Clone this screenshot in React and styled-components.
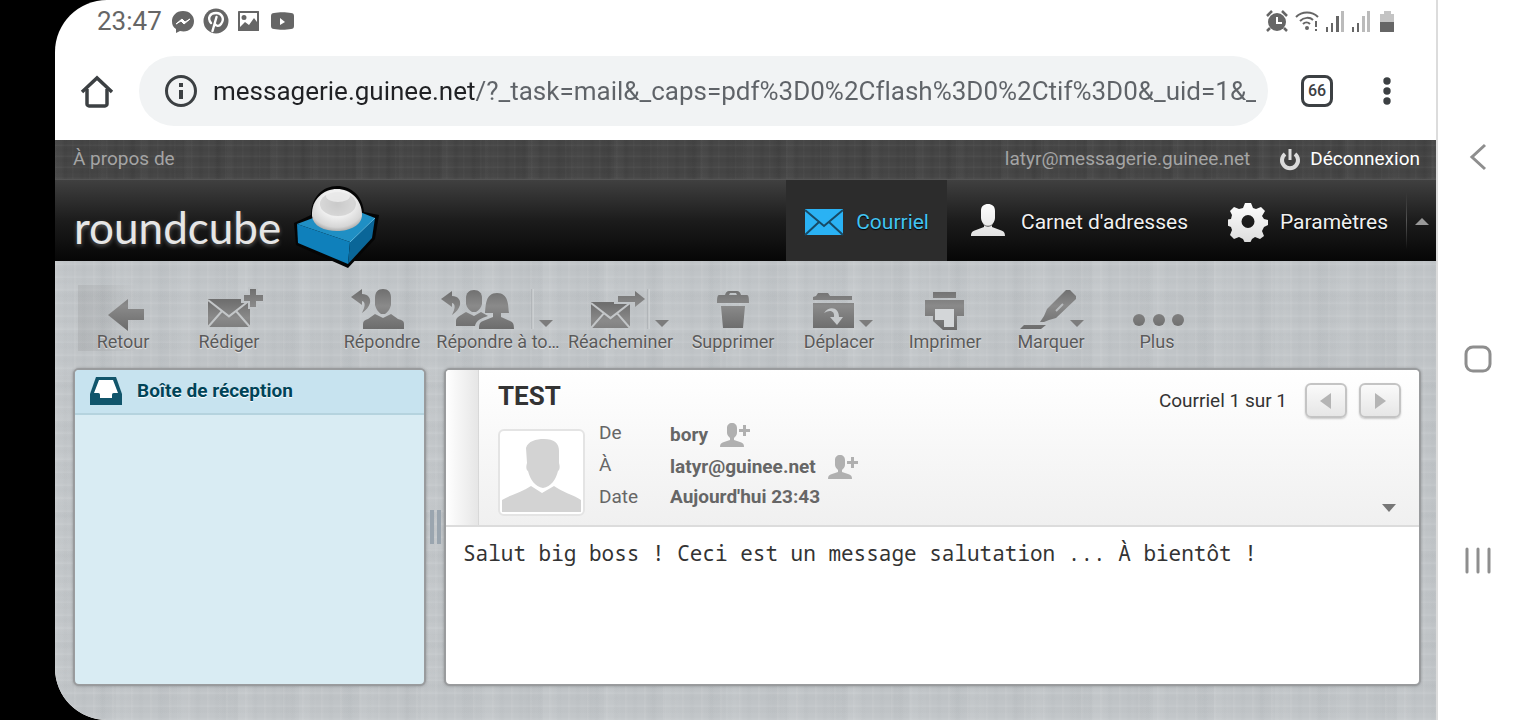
import React from "react";
import styled, { createGlobalStyle, css } from "styled-components";

const GlobalStyle = createGlobalStyle`
  * { box-sizing: border-box; }
  html, body { margin: 0; padding: 0; background: #000; }
  body { font-family: Roboto, "Liberation Sans", sans-serif; }
  button, input { font: inherit; color: inherit; border: 0; margin: 0; padding: 0; background: none; }
  a { color: inherit; text-decoration: none; }
  svg { display: block; flex: none; }
`;

const darkLinen = css`
  background:
    repeating-linear-gradient(90deg, rgba(255,255,255,0.02) 0 1px, transparent 2px 7px, rgba(0,0,0,0.04) 9px 11px, transparent 13px 17px),
    repeating-linear-gradient(90deg, rgba(255,255,255,0.02) 0 5px, transparent 12px 29px, rgba(0,0,0,0.04) 33px, transparent 43px),
    repeating-linear-gradient(0deg, rgba(255,255,255,0.03) 0 1px, transparent 2px 5px, rgba(0,0,0,0.04) 7px, transparent 11px),
    #464646;
`;

const lightLinen = css`
  background:
    repeating-linear-gradient(90deg, rgba(255,255,255,0.06) 0 1px, transparent 3px 7px, rgba(90,100,105,0.02) 9px 11px, transparent 13px 19px),
    repeating-linear-gradient(0deg, rgba(255,255,255,0.07) 0 1px, transparent 3px 6px, rgba(90,100,105,0.02) 8px 9px, transparent 13px),
    repeating-linear-gradient(90deg, rgba(255,255,255,0.05) 0 9px, transparent 19px 41px, rgba(90,100,105,0.03) 47px, transparent 61px),
    repeating-linear-gradient(0deg, rgba(255,255,255,0.04) 0 5px, transparent 13px 27px, rgba(90,100,105,0.02) 33px, transparent 43px),
    #c0c4c7;
`;

const Device = styled.div`
  display: flex;
  min-height: 100vh;
  padding-left: 55px;
  background: linear-gradient(90deg, #000 0 50%, #fff 50%);
`;

const Screen = styled.div`
  flex: 1;
  min-width: 0;
  display: flex;
  flex-direction: column;
  overflow: hidden;
  border-radius: 52px 0 0 52px;
  background: #fff;
`;

const StatusBar = styled.div`
  display: flex;
  align-items: center;
  justify-content: space-between;
  height: 44px;
  padding: 0 39px 2px 42px;
  color: #666;
`;

const StatusGroup = styled.div`
  display: flex;
  align-items: center;
  gap: ${(p) => p.$gap}px;
`;

const Clock = styled.time`
  font-size: 26px;
  line-height: 32px;
`;

const BrowserBar = styled.div`
  display: flex;
  align-items: center;
  height: 96px;
  padding: 12px 31px 14px 24px;
  color: #3c4043;
`;

const AddressBox = styled.label`
  flex: 1;
  min-width: 0;
  display: flex;
  align-items: center;
  gap: 14px;
  height: 70px;
  margin: 0 33px 0 24px;
  padding: 0 12px 0 24px;
  border-radius: 35px;
  background: #f1f3f4;
`;

const AddressInput = styled.input`
  flex: 1;
  min-width: 0;
  font-size: 26px;
  line-height: 36px;
  font-variant-ligatures: none;
  color: transparent;
  background: linear-gradient(90deg, #202124 262px, #5f6368 262px);
  background-clip: text;
  -webkit-background-clip: text;
`;

const IconButton = styled.button`
  display: flex;
  align-items: center;
  justify-content: center;
  width: 36px;
  height: 36px;
`;

const TabsButton = styled.button`
  width: 32px;
  height: 32px;
  border: 3px solid #3c4043;
  border-radius: 8px;
  font-size: 16px;
  line-height: 26px;
  font-weight: 500;
  margin-right: 36px;
`;

const TopLine = styled.div`
  ${darkLinen}
  display: flex;
  align-items: center;
  justify-content: space-between;
  height: 40px;
  padding: 0 16px 2px 18px;
  border-bottom: 1px solid #555;
  font-size: 19px;
  line-height: 24px;
  color: #a4a4a4;
`;

const Session = styled.div`
  display: flex;
  align-items: center;
  gap: 28px;
`;

const Logout = styled.a`
  display: flex;
  align-items: center;
  gap: 8px;
  color: #fff;
`;

const Header = styled.header`
  position: relative;
  z-index: 1;
  display: flex;
  justify-content: space-between;
  height: 81px;
  background: linear-gradient(#404040, #1c1c1c 50%, #060606);
`;

const Logo = styled.a`
  display: flex;
  align-items: flex-start;
  gap: 12px;
  padding: 5px 0 0 19px;
`;

const Wordmark = styled.span`
  padding-top: 18px;
  font: 44px/48px Lato, sans-serif;
  color: #e6e6e6;
  text-shadow: 0 2px 4px rgba(255, 255, 255, 0.3);
`;

const TaskNav = styled.nav`
  display: flex;
  gap: 4px;
`;

const Task = styled.a`
  display: flex;
  align-items: center;
  gap: 12px;
  padding: 2px 18px 0;
  font-size: 21px;
  line-height: 28px;
  white-space: nowrap;
  color: ${(p) => (p.$active ? "#42c4f2" : "#f0f0f0")};
  background: ${(p) => (p.$active ? "#2c2c2c" : "none")};
  text-shadow: 0 1px 1px #000;
`;

const CollapseButton = styled.button`
  display: flex;
  align-items: center;
  justify-content: center;
  width: 30px;
  margin-left: -4px;
  border-left: 1px solid;
  border-image: linear-gradient(transparent 15%, #555 50%, transparent 85%) 1;
`;

const Workspace = styled.main`
  ${lightLinen}
  flex: 1;
  display: flex;
  flex-direction: column;
  padding: 24px 15px 34px 18px;
`;

const Toolbar = styled.div`
  display: flex;
  height: 83px;
  margin-left: -3px;
`;

const Tool = styled.button`
  flex: none;
  display: flex;
  flex-direction: column;
  align-items: center;
  width: ${(p) => p.$width || 106}px;
  height: 72px;
  padding-top: 2px;
  margin-right: ${(p) => p.$after || 0}px;
  font-size: 18px;
  line-height: 22px;
  white-space: nowrap;
  color: #5a5a5a;
  text-shadow: 0 1px 1px #e8e8e8;
  ${(p) =>
    p.$pressed &&
    css`
      background: linear-gradient(90deg, transparent 8px, rgba(120, 120, 120, 0.16) 8px, rgba(120, 120, 120, 0.12) 36px, transparent 68px) 0 0 / 100% 66px no-repeat;
    `}
`;

const Panels = styled.div`
  flex: 1;
  display: grid;
  grid-template-columns: 353px 18px minmax(0, 1fr);
`;

const Panel = styled.section`
  overflow: hidden;
  border: 2px solid #999b9d;
  border-radius: 6px;
  background: ${(p) => p.$bg};
  box-shadow: 0 0 3px rgba(0, 0, 0, 0.25);
`;

const Folder = styled.a`
  display: flex;
  align-items: center;
  gap: 14px;
  height: 45px;
  padding: 0 0 2px 14px;
  border-bottom: 2px solid #b5d3de;
  background: #c7e3ef;
  color: #004458;
  font-size: 19px;
  line-height: 24px;
  font-weight: 700;
  text-shadow: 0 1px 1px #fff;
`;

const Splitter = styled.div`
  align-self: center;
  justify-self: center;
  width: 11px;
  height: 34px;
  border: solid #9aa5af;
  border-width: 0 4px;
`;

const MessageHead = styled.div`
  display: flex;
  height: 157px;
  border-bottom: 2px solid #dcdcdc;
  background: linear-gradient(#fff, #f0f0f0);
`;

const Gutter = styled.div`
  flex: none;
  width: 33px;
  border-right: 1px solid #d8d8d8;
  background: linear-gradient(90deg, #fff, #e6e6e6);
`;

const Summary = styled.div`
  flex: 1;
  padding: 10px 0 0 19px;
`;

const Subject = styled.h1`
  margin: 0;
  font-size: 26px;
  line-height: 32px;
  font-weight: 700;
  color: #333;
`;

const Sender = styled.div`
  display: flex;
  align-items: flex-start;
  gap: 14px;
  padding-top: 7px;
`;

const Photo = styled.div`
  margin-top: 10px;
  padding: 2px;
  border: 2px solid #e4e4e4;
  border-radius: 6px;
  background: #fff;
`;

const Fields = styled.table`
  border-collapse: collapse;
  font-size: 19px;
  line-height: 28px;
  color: #666;
  th {
    width: 71px;
    height: 32px;
    padding: 0;
    font-weight: 400;
    text-align: left;
    vertical-align: top;
  }
  td {
    padding: 0;
    height: 32px;
    font-weight: 700;
  }
  tr:last-child td { vertical-align: top; }
`;

const Address = styled.span`
  display: flex;
  align-items: center;
  gap: 12px;
`;

const AddContact = styled.button`
  height: 28px;
`;

const Pager = styled.div`
  display: flex;
  flex-direction: column;
  align-items: flex-end;
  justify-content: space-between;
  padding: 13px 18px 11px 0;
`;

const PagerRow = styled.div`
  display: flex;
  align-items: center;
  gap: 12px;
  font-size: 19px;
  line-height: 24px;
  color: #333;
`;

const PagerCount = styled.span`
  margin-right: 6px;
`;

const PagerButton = styled.button`
  display: flex;
  align-items: center;
  justify-content: center;
  width: 42px;
  height: 35px;
  border: 2px solid #c4c4c4;
  border-radius: 6px;
  background: linear-gradient(#fafafa, #e6e6e6);
  box-shadow: 0 1px 2px rgba(0, 0, 0, 0.2);
`;

const ExpandButton = styled.button`
  height: 12px;
  margin-right: 5px;
`;

const MessageBody = styled.p`
  margin: 0;
  padding: 10px 17px;
  font: 21px/32px "Noto Sans Mono", "DejaVu Sans Mono", monospace;
  color: #333;
`;

const Rail = styled.nav`
  flex: none;
  display: flex;
  flex-direction: column;
  width: 84px;
  padding: 56px 2px 58px 0;
  border-left: 2px solid #dcdcdc;
  background: #fff;
`;

const RailButton = styled.button`
  flex: 1;
  display: flex;
  align-items: center;
  justify-content: center;
`;

const Art = ({ w, h, children, ...rest }) => (
  <svg width={w} height={h} viewBox={`0 0 ${w} ${h}`} aria-hidden="true" {...rest}>
    {children}
  </svg>
);

const ToolArt = ({ w = 106, children }) => (
  <Art w={w} h={44} fill="url(#toolGray)">
    {children}
  </Art>
);

const HiddenDefs = styled.svg`
  position: absolute;
`;

const Defs = () => (
  <HiddenDefs width="0" height="0" aria-hidden="true">
    <defs>
      <linearGradient id="toolGray" gradientUnits="userSpaceOnUse" x1="0" y1="2" x2="0" y2="44">
        <stop offset="0" stopColor="#6f6f6f" />
        <stop offset="0.4" stopColor="#8a8a8a" />
        <stop offset="1" stopColor="#6a6a6a" />
      </linearGradient>
      <linearGradient id="whiteFade" gradientUnits="userSpaceOnUse" x1="0" y1="0" x2="0" y2="40">
        <stop offset="0" stopColor="#fff" />
        <stop offset="1" stopColor="#dcdcdc" />
      </linearGradient>
      <radialGradient id="ball" cx="0.5" cy="0.35" r="0.7">
        <stop offset="0" stopColor="#c4c4c4" />
        <stop offset="0.45" stopColor="#f0f0f0" />
        <stop offset="0.8" stopColor="#d6d6d6" />
        <stop offset="1" stopColor="#999" />
      </radialGradient>
    </defs>
  </HiddenDefs>
);

const Caret = ({ x }) => <path d={`M${x - 7} 33h14l-7 7z`} fill="#7c7c7c" />;
const Divider = ({ x }) => (
  <>
    <path d={`M${x} 2v40`} stroke="#a3a7aa" />
    <path d={`M${x + 1} 2v40`} stroke="#d8dbdd" />
  </>
);
const ReplyArrow = ({ x, y }) => (
  <path transform={`translate(${x} ${y})`} d="M0 8 11 0v5c6 0 9 4 8 9-1 4-4 7-8 10 3-6 4-11 0-12v4z" />
);
const Envelope = ({ x, y, w, h }) => (
  <g transform={`translate(${x} ${y})`}>
    <path d={`M0 0h${w}v${h}H0z`} />
    <path
      d={`M0 1 ${w / 2} ${h * 0.62} ${w} 1M0 ${h} ${w * 0.34} ${h * 0.42}M${w} ${h} ${w * 0.66} ${h * 0.42}`}
      fill="none"
      stroke="#c3c6c8"
      strokeWidth="2"
    />
  </g>
);

const TOOLS = [
  { label: "Retour", pressed: true, art: <path d="M38 28 58 12v10h16v11H58v11z" /> },
  {
    label: "Rédiger",
    after: 47,
    art: (
      <>
        <Envelope x={32} y={12} w={42} h={28} />
        <path d="M65 6h7V0h10v6h6v10h-6v6H72v-6h-7z" fill="#c0c4c7" />
        <path d="M68 8h6V2h6v6h7v6h-7v6h-6v-6h-6z" />
      </>
    ),
  },
  {
    label: "Répondre",
    art: (
      <>
        <ReplyArrow x={22} y={2} />
        <path d="M46 11c0-6 3-9 8-9s8 3 8 9v7c-1 4-3 7-6 9h-4c-3-2-5-5-6-9z" />
        <path d="M34 42v-5c0-3 2-4 5-5l7-5 8 4 8-4 7 5c4 1 6 2 6 5v5z" />
      </>
    ),
  },
  {
    label: "Répondre à to…",
    width: 126,
    art: (
      <>
        <ReplyArrow x={6} y={4} />
        <path d="M31 11c0-5 3-8 8-8s8 3 8 8v6c-1 4-3 6-6 8h-4c-3-2-5-4-6-8z" />
        <path d="M21 39v-5c0-4 4-5 10-9l8 4 7-4 7 4c-6 2-12 4-13 10z" />
        <path d="M50 26c1-7 0-20 12-20s11 13 12 20h-8v4l9 4c3 1 4 3 4 8H44c0-5 1-7 4-8l10-4v-4z" />
        <Divider x={97} />
        <Caret x={111} />
      </>
    ),
  },
  {
    label: "Réacheminer",
    width: 119,
    art: (
      <>
        <Envelope x={30} y={15} w={39} h={26} />
        <path d="M53 7h18V3l13 9-13 9v-4H53z" fill="#c0c4c7" />
        <path d="M57 9h17V4l10 8-10 8v-5H57z" />
        <Divider x={87} />
        <Caret x={101} />
      </>
    ),
  },
  {
    label: "Supprimer",
    art: (
      <>
        <path fillRule="evenodd" d="M45 8c1-3 2-4 4-4h8c2 0 3 1 4 4h6c2 0 2 5 2 8H37c0-3 0-8 2-8zm4 0h8l-1-2h-6z" />
        <path d="M41 19h24l-2 22H43z" />
      </>
    ),
  },
  {
    label: "Déplacer",
    art: (
      <>
        <path d="M27 13V10l3-1 2-3h10l2 3h22v4z" />
        <path d="M27 16h41v25H27z" />
        <path d="M38 26c6-8 15-5 15 4h4l-6 8-7-8h4c1-6-4-8-10-4z" fill="#c6c9cb" />
        <Caret x={80} />
      </>
    ),
  },
  {
    label: "Imprimer",
    art: (
      <>
        <path d="M41 5h23v6H41z" />
        <path d="M33 13h39v16H64V21H41v8h-8z" />
        <path fillRule="evenodd" d="M41 21h24v22H51L41 34z" />
        <path d="M43 22h19v18H52v-7h-9z" fill="#d3d6d8" />
      </>
    ),
  },
  {
    label: "Marquer",
    art: (
      <>
        <path d="M68 3h4l6 6v3L58 31l-7 2-5 2h-4l4-6 3-7z" />
        <path d="m58 24 7-7" stroke="#b9bcbe" strokeWidth="2" />
        <path d="M26 38h22l-5 4H22z" />
        <Caret x={79} />
      </>
    ),
  },
  {
    label: "Plus",
    art: (
      <>
        <circle cx="35" cy="33" r="6" />
        <circle cx="55" cy="33" r="6" />
        <circle cx="74" cy="33" r="6" />
      </>
    ),
  },
];

const AddPersonIcon = () => (
  <Art w={31} h={25} fill="#b0b0b0">
    <path d="M7 5c0-3 2-5 5-5s5 2 5 5v5c0 2-2 4-3 5v2l6 2c3 1 4 2 4 5H0c0-3 1-4 4-5l6-2v-2c-1-1-3-3-3-5z" />
    <path d="M19 6h4V2h3v4h4v3h-4v4h-3V9h-4z" />
  </Art>
);

const SignalIcon = ({ strong }) => (
  <Art w={20} h={22}>
    <path d="M1 17h2v5H1zM6 13h2v9H6z" fill="#666" />
    <path d="M11 6h3v16h-3z" fill={strong ? "#666" : "#bbb"} />
    <path d="M16 1h3v21h-3z" fill="#bbb" />
  </Art>
);

export default function App() {
  return (
    <Device>
      <GlobalStyle />
      <Defs />
      <Screen>
        <StatusBar>
          <StatusGroup $gap={8}>
            <Clock>23:47</Clock>
            <StatusGroup $gap={7}>
              <Art w={26} h={26} fill="#666">
                <path d="M13 3C6 3 2 8 2 13c0 4 1 6 4 8v4l4-2c8 2 14-3 14-10C24 8 20 3 13 3z" />
                <path d="m6 16 6-5 3 3 5-3-6 5-3-3z" fill="#fff" stroke="#fff" />
              </Art>
              <Art w={26} h={26} fill="#666">
                <circle cx="13" cy="13" r="12.500" />
                <path d="M8 15c-4-5-1-10 5-10s9 6 5 11c-2 3-5 2-6 0M13.500 9 9.500 23" fill="none" stroke="#fff" strokeWidth="2.400" strokeLinecap="round" />
              </Art>
              <Art w={26} h={26} fill="#666">
                <path fillRule="evenodd" d="M4 3h18c1 0 1 0 1 1v18c0 1 0 1-1 1H3c-1 0-1 0-1-1V4c0-1 0-1 2-1zm0 2v14l5-5 4 3 5-7 3 4V5zm4 2a2 2 0 1 1 0 5 2 2 0 0 1 0-5z" />
              </Art>
              <Art w={26} h={26} fill="#666">
                <path fillRule="evenodd" d="M5 5c5-1 12-1 17 0 2 0 3 1 3 3v10c0 2-1 3-3 3-5 1-12 1-17 0-2 0-3-1-3-3V8c0-2 1-3 3-3zm6 5v7l5-3z" />
              </Art>
            </StatusGroup>
          </StatusGroup>
          <StatusGroup $gap={6}>
            <Art w={24} h={24} fill="#666">
              <circle cx="12" cy="13" r="9" />
              <path d="M5 19l-3 3M19 19l3 3M2 7l5-5M22 7l-5-5" stroke="#666" strokeWidth="2.500" />
              <path d="M12 8v6h5" fill="none" stroke="#fff" strokeWidth="2" />
            </Art>
            <Art w={24} h={24} fill="none" stroke="#666" strokeWidth="2">
              <path d="M1 8c6-6 16-6 22 0M5 12c4-4 10-4 13-1M8 15c2-2 5-2 7 0" />
              <path d="M21 12v6M21 20v2" />
              <circle cx="12" cy="19" r="1" fill="#666" />
            </Art>
            <SignalIcon strong />
            <SignalIcon />
            <Art w={20} h={24}>
              <path d="M3 5h4V2h7v3h3v8H3z" fill="#c4c4c4" />
              <path d="M3 13h14v9c0 1 0 1-1 1H4c-1 0-1 0-1-1z" fill="#666" />
            </Art>
          </StatusGroup>
        </StatusBar>

        <BrowserBar>
          <IconButton aria-label="Accueil">
            <Art w={34} h={34} fill="none" stroke="#3c4043" strokeWidth="3.500">
              <path d="M7 15v15c0 1 1 2 2 2h16c1 0 2-1 2-2V15" />
              <path d="M2 18 17 4l15 14" />
            </Art>
          </IconButton>
          <AddressBox>
            <Art w={36} h={36} fill="none" stroke="#3c4043" strokeWidth="3">
              <circle cx="18" cy="18" r="14.500" />
              <path d="M18 10v4M18 17v9" strokeWidth="4" />
            </Art>
            <AddressInput
              aria-label="Adresse"
              defaultValue="messagerie.guinee.net/?_task=mail&_caps=pdf%3D0%2Cflash%3D0%2Ctif%3D0&_uid=1&_"
            />
          </AddressBox>
          <TabsButton>66</TabsButton>
          <IconButton aria-label="Menu">
            <Art w={8} h={30} fill="#3c4043">
              <circle cx="4" cy="5" r="3.700" />
              <circle cx="4" cy="15" r="3.700" />
              <circle cx="4" cy="25" r="3.700" />
            </Art>
          </IconButton>
        </BrowserBar>

        <TopLine>
          <a href="#about">À propos de</a>
          <Session>
            <span>latyr@messagerie.guinee.net</span>
            <Logout href="#logout">
              <Art w={24} h={24} fill="none" stroke="#dcdcdc" strokeWidth="4">
                <path d="M7 7a8 8 0 1 0 10 0" />
                <path d="M12 2v11" strokeWidth="3" />
              </Art>
              Déconnexion
            </Logout>
          </Session>
        </TopLine>

        <Header>
          <Logo href="#home">
            <Wordmark>roundcube</Wordmark>
            <Art w={88} h={84} aria-hidden="true">
              <path d="M1 38 18 30C18 12 30 1 44 1s26 10 27 26l15 3-4 24-27 29L3 60z" fill="#050505" />
              <path d="m4 39 53 18 25-24-30-12z" fill="#1f8fc4" />
              <path d="m4 39 53 18-2 22L5 58z" fill="#0f80bb" />
              <path d="m57 57 25-24-3 20-24 26z" fill="#0a6698" />
              <path d="m57 57 25-24" stroke="#5bb8e2" />
              <path d="M19 31C18 14 31 4 44 4s25 10 25 26c0 10-12 16-25 16S20 41 19 31z" fill="url(#ball)" />
              <ellipse cx="45" cy="19" rx="18" ry="12" fill="#ccc" opacity="0.7" />
              <ellipse cx="45" cy="11" rx="12" ry="6" fill="#f2f2f2" opacity="0.7" />
            </Art>
          </Logo>
          <TaskNav>
            <Task href="#mail" $active>
              <Art w={40} h={40}>
                <path d="M1 7h38v26H1z" fill="#2ab2f4" />
                <path d="m1 8 19 16 19-16M1 33l14-13M39 33 25 20" fill="none" stroke="#174a66" strokeWidth="2" />
              </Art>
              Courriel
            </Task>
            <Task href="#contacts">
              <Art w={40} h={40} fill="url(#whiteFade)">
                <path d="M12 9c0-5 3-7 7-7s7 2 7 7v7c0 3-2 5-3 7v2l8 3c4 1 5 3 5 6H2c0-3 1-5 5-6l8-3v-2c-1-2-3-4-3-7z" />
                <path d="M14 22c3 3 7 3 10 0" stroke="#555" fill="none" />
              </Art>
              Carnet d'adresses
            </Task>
            <Task href="#settings">
              <Art w={40} h={40} fill="url(#whiteFade)">
                <path
                  fillRule="evenodd"
                  d="M17 1h6l2 5 3 1 5-2 4 4-3 5 2 3 4 1v5l-4 2-2 4 2 5-4 3-5-2-3 2-2 4h-5l-2-4-4-2-5 2-4-4 2-5-1-3-5-2v-5l5-1 1-4-2-4 4-4 5 2 4-1zM20 13a6 6 0 1 0 0 13 6 6 0 0 0 0-13z"
                />
              </Art>
              Paramètres
            </Task>
            <CollapseButton aria-label="Réduire">
              <Art w={14} h={8}>
                <path d="M0 8h14L7 1z" fill="#999" />
              </Art>
            </CollapseButton>
          </TaskNav>
        </Header>

        <Workspace>
          <Toolbar>
            {TOOLS.map((t) => (
              <Tool key={t.label} $width={t.width} $after={t.after} $pressed={t.pressed}>
                <ToolArt w={t.width}>{t.art}</ToolArt>
                {t.label}
              </Tool>
            ))}
          </Toolbar>
          <Panels>
            <Panel $bg="#d9ecf3">
              <Folder href="#inbox">
                <Art w={34} h={30}>
                  <path d="M7 1h20l6 17v11H1V18z" fill="#11556b" />
                  <path d="M10 4h14l5 13h-4c-2 0-2 1-2 3v2H11v-2c0-2 0-3-2-3H5z" fill="#fff" />
                </Art>
                Boîte de réception
              </Folder>
            </Panel>
            <Splitter />
            <Panel $bg="#fff">
              <MessageHead>
                <Gutter />
                <Summary>
                  <Subject>TEST</Subject>
                  <Sender>
                    <Photo>
                      <Art w={79} h={79} fill="#d3d3d3">
                        <path d="M24 15C26 8 34 6 42 6c10 0 15 4 15 12v12c1 3 1 7-1 8-2 8-7 16-15 17-8-1-13-9-15-17-2-1-2-5-1-8z" />
                        <path d="M0 79V67c8-5 20-8 29-14l11 7 12-7c8 6 20 9 27 14v12z" />
                      </Art>
                    </Photo>
                    <Fields>
                      <tbody>
                        <tr>
                          <th scope="row">De</th>
                          <td>
                            <Address>
                              bory
                              <AddContact aria-label="Ajouter bory aux contacts"><AddPersonIcon /></AddContact>
                            </Address>
                          </td>
                        </tr>
                        <tr>
                          <th scope="row">À</th>
                          <td>
                            <Address>
                              latyr@guinee.net
                              <AddContact aria-label="Ajouter latyr@guinee.net aux contacts"><AddPersonIcon /></AddContact>
                            </Address>
                          </td>
                        </tr>
                        <tr>
                          <th scope="row">Date</th>
                          <td>Aujourd'hui 23:43</td>
                        </tr>
                      </tbody>
                    </Fields>
                  </Sender>
                </Summary>
                <Pager>
                  <PagerRow>
                    <PagerCount>Courriel 1 sur 1</PagerCount>
                    <PagerButton aria-label="Message précédent">
                      <Art w={12} h={16}><path d="M11 0v16L0 8z" fill="#b4b4b4" /></Art>
                    </PagerButton>
                    <PagerButton aria-label="Message suivant">
                      <Art w={12} h={16}><path d="M1 0v16l11-8z" fill="#b4b4b4" /></Art>
                    </PagerButton>
                  </PagerRow>
                  <ExpandButton aria-label="Afficher plus d'en-têtes">
                    <Art w={14} h={8}><path d="M0 0h14L7 8z" fill="#777" /></Art>
                  </ExpandButton>
                </Pager>
              </MessageHead>
              <MessageBody>Salut big boss ! Ceci est un message salutation ... À bientôt !</MessageBody>
            </Panel>
          </Panels>
        </Workspace>
      </Screen>
      <Rail>
        <RailButton aria-label="Retour système">
          <Art w={18} h={28} fill="none" stroke="#8e8e8e" strokeWidth="3"><path d="M16 2 3 14l13 12" /></Art>
        </RailButton>
        <RailButton aria-label="Écran d'accueil">
          <Art w={28} h={28} fill="none" stroke="#8e8e8e" strokeWidth="3"><rect x="2" y="2" width="24" height="24" rx="7" /></Art>
        </RailButton>
        <RailButton aria-label="Applications récentes">
          <Art w={26} h={28} stroke="#8e8e8e" strokeWidth="3" strokeLinecap="round"><path d="M2 2v23M13 2v23M24 2v23" /></Art>
        </RailButton>
      </Rail>
    </Device>
  );
}
